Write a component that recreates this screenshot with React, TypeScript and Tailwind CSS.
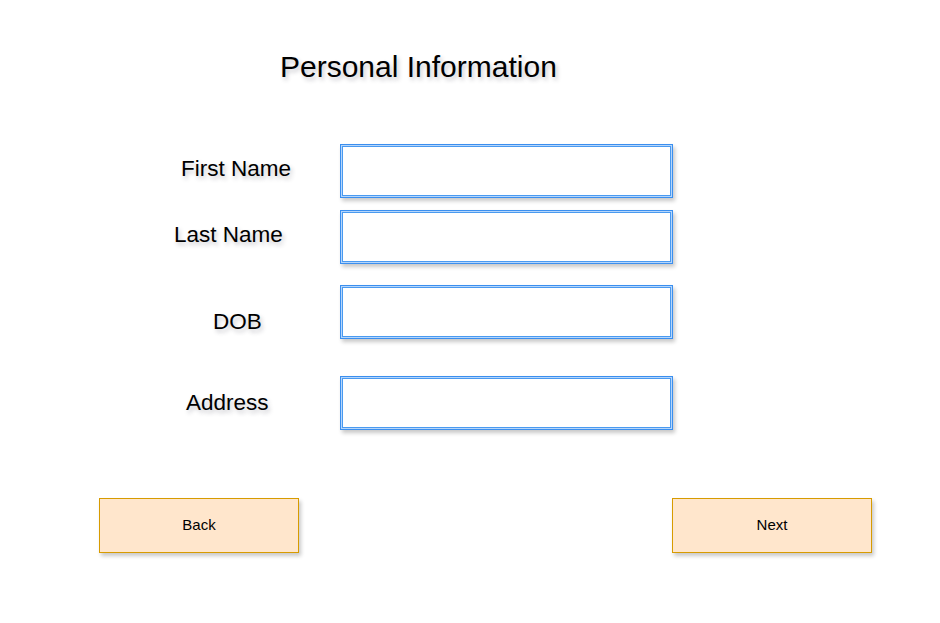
const fields = [
  { label: "First Name", pad: "pl-[181px]", gap: "mt-[59px]", nudge: "mb-[4px]" },
  { label: "Last Name", pad: "pl-[174px]", gap: "mt-[12px]", nudge: "mb-[4px]" },
  { label: "DOB", pad: "pl-[213px]", gap: "mt-[21px]", nudge: "mt-[20px]" },
  { label: "Address", pad: "pl-[186px]", gap: "mt-[37px]", nudge: "" },
];

const shadowText = "[text-shadow:2px_3px_4px_rgba(40,40,60,0.25)]";

export default function App() {
  return (
    <div className="w-[940px] h-[623px] bg-white font-['Liberation_Sans',Arial,sans-serif] text-black">
      <div className="pt-[49px] pl-[280px]">
        <h1 className={`text-[30px] leading-[36px] ${shadowText}`}>Personal Information</h1>
      </div>

      {fields.map((f) => (
        <div key={f.label} className={`flex items-center ${f.gap}`}>
          <div className={`w-[340px] ${f.pad}`}>
            <span className={`block text-[22.5px] leading-[26px] ${f.nudge} ${shadowText}`}>{f.label}</span>
          </div>
          <input
            type="text"
            className="w-[333px] h-[54px] bg-white border border-[#3b8fef] outline-none shadow-[inset_0_0_0_1px_#b6d6fb,inset_0_0_0_2px_#4a9af0,2px_3px_4px_rgba(0,0,0,0.22)]"
          />
        </div>
      ))}

      <div className="flex justify-between pl-[99px] pr-[68px] mt-[68px]">
        <button className="w-[200px] h-[55px] bg-[#ffe6cc] border border-[#d79b00] text-[15px] shadow-[2px_3px_4px_rgba(0,0,0,0.22)]">
          Back
        </button>
        <button className="w-[200px] h-[55px] bg-[#ffe6cc] border border-[#d79b00] text-[15px] shadow-[2px_3px_4px_rgba(0,0,0,0.22)]">
          Next
        </button>
      </div>
    </div>
  );
}
